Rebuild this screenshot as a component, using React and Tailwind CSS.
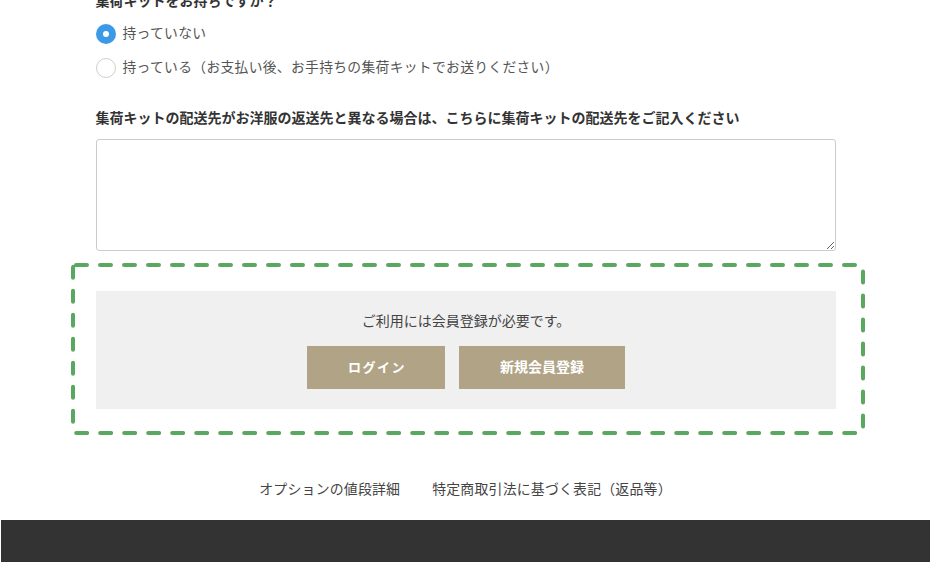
import { useState } from "react";

const font = "font-['Liberation_Serif','Noto_Sans_CJK_JP',serif]";

function Radio({ checked, label, onClick }) {
  return (
    <label onClick={onClick} className="flex items-center gap-[7px] h-[20px] cursor-pointer">
      {checked ? (
        <span className="w-[20px] h-[20px] rounded-full bg-[#3b99e8] flex items-center justify-center">
          <span className="w-[6px] h-[6px] rounded-full bg-white" />
        </span>
      ) : (
        <span className="w-[20px] h-[20px] rounded-full border border-[#cfcfcf] bg-white" />
      )}
      <span className="text-[13.8px] text-[#555] tracking-[0.3px]">{label}</span>
    </label>
  );
}

export default function App() {
  const [hasKit, setHasKit] = useState(false);

  return (
    <div className={`${font} bg-white w-[931px] h-[562px] overflow-hidden flex flex-col`}>
      <div className="w-[740px] mx-auto">
        <h3 className="mt-[-9px] text-[14px] font-bold text-[#333] h-[20px]">
          集荷キットをお持ちですか？
        </h3>
        <div className="mt-[13px] flex flex-col gap-[14px]">
          <Radio checked={!hasKit} label="持っていない" onClick={() => setHasKit(false)} />
          <Radio
            checked={hasKit}
            label="持っている（お支払い後、お手持ちの集荷キットでお送りください）"
            onClick={() => setHasKit(true)}
          />
        </div>

        <p className="mt-[30px] text-[14px] font-bold text-[#333] h-[20px]">
          集荷キットの配送先がお洋服の返送先と異なる場合は、こちらに集荷キットの配送先をご記入ください
        </p>
        <textarea className="mt-[11px] block w-full h-[112px] border border-[#ccc] rounded-[3px] outline-none" />
      </div>

      <div className="relative w-[794px] ml-[71px] mt-[12px] h-[172px] flex items-start pl-[25px] pt-[28px]">
        <svg className="absolute inset-0 pointer-events-none" width="794" height="172">
          <rect
            x="2"
            y="2"
            width="790"
            height="168"
            rx="3"
            fill="none"
            stroke="#5aa75f"
            strokeWidth="4"
            strokeLinecap="round"
            strokeDasharray="11 13"
          />
        </svg>
        <div className="w-[740px] h-[118px] bg-[#f0f0f0] flex flex-col items-center pt-[20px]">
          <p className="text-[14px] text-[#444] h-[20px]">ご利用には会員登録が必要です。</p>
          <div className="mt-[15px] flex gap-[14px]">
            <button className="w-[138px] h-[43px] bg-[#b1a486] text-white text-[13px] font-bold tracking-[0.12em] pl-[2px]">
              ログイン
            </button>
            <button className="w-[166px] h-[43px] bg-[#b1a486] text-white text-[14px] font-bold">
              新規会員登録
            </button>
          </div>
        </div>
      </div>

      <div className="mt-[45px] flex justify-center gap-[32px] text-[13.9px] text-[#444] h-[20px] tracking-[0.2px]">
        <a>オプションの値段詳細</a>
        <a>特定商取引法に基づく表記（返品等）</a>
      </div>

      <div className="mt-[20px] mx-px flex-1 bg-[#333]" />
    </div>
  );
}
